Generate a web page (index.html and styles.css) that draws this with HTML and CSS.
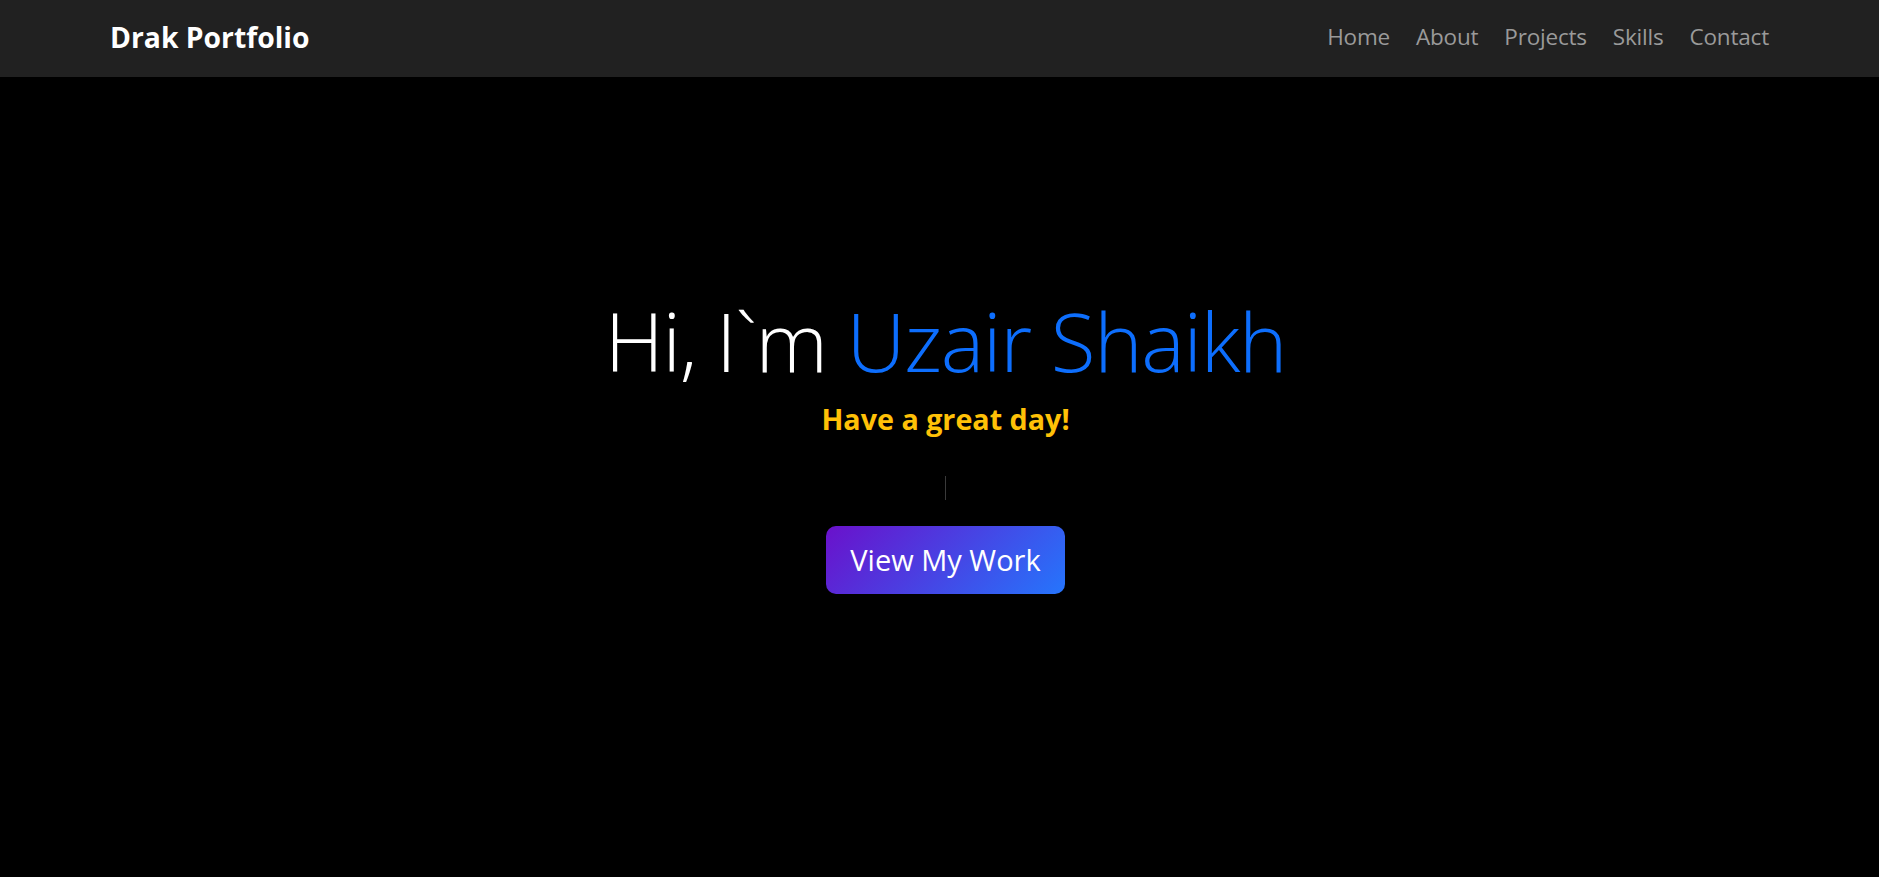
FILE: index.html
```html
<!DOCTYPE html>
<html lang="en">
<head>
  <meta charset="UTF-8">
  <title>Drak Portfolio</title>
  <meta name="viewport" content="width=device-width, initial-scale=1.0">
  <link rel="stylesheet" href="styles.css">
</head>
<body>

<nav class="navbar">
  <a class="brand" href="#">Drak Portfolio</a>
  <ul class="nav-links">
    <li><a href="#home">Home</a></li>
    <li><a href="#about">About</a></li>
    <li><a href="#projects">Projects</a></li>
    <li><a href="#skills">Skills</a></li>
    <li><a href="#contact">Contact</a></li>
  </ul>
</nav>

<section class="hero" id="home">
  <h1 class="hero-title">Hi, I`m <span class="name">Uzair Shaikh</span></h1>
  <p class="greeting">Have a great day!</p>
  <div class="typing"><span class="cursor"></span></div>
  <a class="work-button" href="#projects">View My Work</a>
</section>

</body>
</html>
```

FILE: styles.css
```css
body {
  font-family: 'Open Sans', 'Noto Sans', Arial, sans-serif;
  background: #000;
  margin: 0;
  padding: 0;
  color: #fff;
}
.navbar {
  background: #212121;
  height: 77px;
  display: flex;
  align-items: center;
  justify-content: space-between;
  padding: 0 110px 4px;
  box-sizing: border-box;
}
.brand {
  color: #fff;
  font-weight: 700;
  font-size: 28.3px;
  text-decoration: none;
}
.nav-links {
  list-style: none;
  display: flex;
  gap: 26px;
  margin: 0;
  padding: 0;
}
.nav-links a {
  color: #9a9a9a;
  font-size: 22.5px;
  text-decoration: none;
  letter-spacing: -0.2px;
}
.hero {
  height: calc(100vh - 77px);
  box-sizing: border-box;
  padding: 214px 0 0 12px;
  text-align: center;
}
.hero-title {
  font-size: 82px;
  font-weight: 300;
  line-height: 1.2;
  margin: 0;
  letter-spacing: -1.3px;
}
.name {
  color: #0d6efd;
}
.greeting {
  color: #ffc107;
  font-weight: 700;
  font-size: 28.7px;
  line-height: 1.2;
  margin: 13px 0 0;
}
.typing {
  height: 24px;
  margin-top: 39px;
}
.cursor {
  display: inline-block;
  width: 1px;
  height: 24px;
  background: #3a3a3a;
}
.work-button {
  display: inline-block;
  margin-top: 26px;
  padding: 12px 24px;
  line-height: 44px;
  font-size: 29px;
  color: #fff;
  text-decoration: none;
  border-radius: 10px;
  background: linear-gradient(135deg, #6a11cb, #2575fc);
}
```
